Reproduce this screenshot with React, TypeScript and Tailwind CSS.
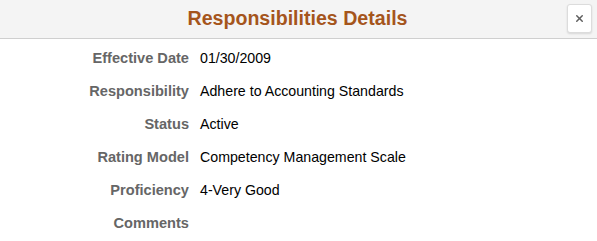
import { X } from 'lucide-react'

const rows = [
    { label: 'Effective Date', value: '01/30/2009' },
    { label: 'Responsibility', value: 'Adhere to Accounting Standards' },
    { label: 'Status', value: 'Active' },
    { label: 'Rating Model', value: 'Competency Management Scale' },
    { label: 'Proficiency', value: '4-Very Good' },
    { label: 'Comments', value: '' },
]

export default function App() {
    return (
        <div className="w-[597px] h-[241px] bg-white font-['Liberation_Sans',Arial,sans-serif] overflow-hidden">
            {/* Modal header */}
            <div className="relative h-[39px] bg-[#f4f4f4] border-b border-[#cfcfcf] flex items-center justify-center">
                <h1 className="text-[19.6px] font-bold text-[#a5551c] leading-none -mt-[1px] pr-[2px]">Responsibilities Details</h1>
                <button className="absolute right-[5px] top-[4px] w-[25px] h-[29px] bg-white border border-[#dcdcdc] rounded-[3px] shadow-[0_1px_2px_rgba(0,0,0,0.12)] flex items-center justify-center">
                    <X size={11} strokeWidth={3.2} className="text-[#5f5f5f]" />
                </button>
            </div>

            {/* Detail rows */}
            <div className="pt-[3px]">
                {rows.map((r) => (
                    <div key={r.label} className="h-[33px] flex items-center">
                        <div className="w-[189px] text-right font-bold text-[14.6px] text-[#666666]">{r.label}</div>
                        <div className="pl-[11px] text-[14.2px] text-black">{r.value}</div>
                    </div>
                ))}
            </div>
        </div>
    )
}
